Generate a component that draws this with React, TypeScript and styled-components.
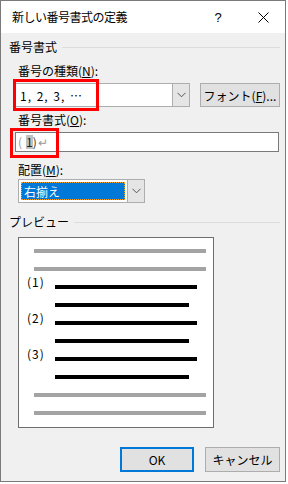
import React from "react";
import styled, { createGlobalStyle } from "styled-components";

const Global = createGlobalStyle`
  html, body { margin: 0; padding: 0; background: #ffffff; }
  body { font-family: "Noto Sans CJK JP", "Noto Sans", sans-serif; font-size: 12px; color: #000; }
  * { box-sizing: border-box; }
`;

const Window = styled.div`
  width: 286px;
  height: 482px;
  border: 1px solid #7a7a7a;
  display: flex;
  flex-direction: column;
  background: #f0f0f0;
`;

const TitleBar = styled.div`
  height: 32px;
  background: #ffffff;
  display: flex;
  align-items: center;
  padding-left: 11px;
  flex-shrink: 0;
`;

const TitleText = styled.div`
  flex: 1;
  font-size: 12px;
  line-height: 14px;
  letter-spacing: -0.5px;
`;

const CaptionButton = styled.div<{ $w: number }>`
  width: ${(p) => p.$w}px;
  height: 32px;
  display: flex;
  align-items: center;
  justify-content: center;
  font-family: "Liberation Sans", sans-serif;
  font-size: 13px;
`;

const Body = styled.div`
  flex: 1;
  display: flex;
  flex-direction: column;
  padding: 0 5px 0 8px;
`;

const GroupHeader = styled.div<{ $mt: number }>`
  margin-top: ${(p) => p.$mt}px;
  height: 14px;
  display: flex;
  align-items: center;
  gap: 5px;
  line-height: 14px;
  &::after {
    content: "";
    flex: 1;
    height: 1px;
    background: #dcdcdc;
  }
`;

const Section = styled.div`
  display: flex;
  flex-direction: column;
  padding-left: 6px;
`;

const FieldLabel = styled.div<{ $mt: number }>`
  margin-top: ${(p) => p.$mt}px;
  margin-left: 3px;
  height: 14px;
  line-height: 14px;
`;

const Row = styled.div<{ $mt: number }>`
  margin-top: ${(p) => p.$mt}px;
  display: flex;
  align-items: center;
`;

const Anchor = styled.div<{ $ml?: number }>`
  position: relative;
  display: flex;
  margin-left: ${(p) => p.$ml ?? 0}px;
`;

const RedMark = styled.div<{ $l: number; $t: number; $w: number; $h: number }>`
  position: absolute;
  left: ${(p) => p.$l}px;
  top: ${(p) => p.$t}px;
  width: ${(p) => p.$w}px;
  height: ${(p) => p.$h}px;
  border: 3px solid #ff0000;
  pointer-events: none;
`;

const Combo = styled.div<{ $w: number; $h: number }>`
  width: ${(p) => p.$w}px;
  height: ${(p) => p.$h}px;
  display: flex;
  border: 1px solid #adadad;
  background: #ffffff;
`;

const ComboField = styled.div`
  flex: 1;
  display: flex;
  align-items: center;
  padding-left: 4px;
  font-size: 12px;
  letter-spacing: 1px;
  word-spacing: 1px;
`;

const DropButton = styled.div`
  width: 17px;
  background: #e5e5e5;
  border-left: 1px solid #adadad;
  display: flex;
  align-items: center;
  justify-content: center;
`;

const PushButton = styled.div<{ $w: number; $default?: boolean }>`
  width: ${(p) => p.$w}px;
  height: 25px;
  background: #e1e1e1;
  border: ${(p) => (p.$default ? "2px solid #0078d7" : "1px solid #adadad")};
  display: flex;
  align-items: center;
  justify-content: center;
  font-size: 12px;
`;

const FontButton = styled(PushButton)`
  margin-left: auto;
  height: 24px;
`;

const TextInput = styled.div`
  width: 264px;
  height: 20px;
  border: 1px solid #7a7a7a;
  background: #ffffff;
  display: flex;
  align-items: center;
  padding-left: 2px;
  font-size: 12px;
  line-height: 14px;
`;

const Glyph = styled.span<{ $c: string; $mr?: number }>`
  color: ${(p) => p.$c};
  margin-right: ${(p) => p.$mr ?? 0}px;
`;

const Hilite = styled.span`
  background: #c0c0c0;
  color: #222;
  line-height: 14px;
`;

const Selection = styled.div`
  flex: 1;
  margin: 2px;
  background: #0078d7;
  border: 1px dotted #f5a623;
  color: #ffffff;
  display: flex;
  align-items: center;
  padding-left: 2px;
`;

const Preview = styled.div`
  margin-top: 8px;
  margin-left: 9px;
  width: 196px;
  height: 191px;
  border: 1px solid #6e6e6e;
  background: #ffffff;
  display: flex;
  flex-direction: column;
  padding-top: 4px;
`;

const PreviewRow = styled.div`
  height: 18px;
  display: flex;
  align-items: center;
`;

const NumberCell = styled.div`
  width: 36px;
  padding-left: 8px;
  font-size: 12px;
  line-height: 14px;
  letter-spacing: 1px;
  transform: translateY(-5px);
`;

const Bar = styled.div<{ $w: number; $ml: number; $c: string }>`
  width: ${(p) => p.$w}px;
  margin-left: ${(p) => p.$ml}px;
  height: 4px;
  background: ${(p) => p.$c};
`;

const ButtonRow = styled.div`
  margin-top: 19px;
  display: flex;
  justify-content: flex-end;
  gap: 11px;
`;

const Chevron = () => (
  <svg width="9" height="6" viewBox="0 0 9 6">
    <polyline points="0.5,0.8 4.5,4.8 8.5,0.8" fill="none" stroke="#555" strokeWidth="1" />
  </svg>
);

const CloseIcon = () => (
  <svg width="11" height="11" viewBox="0 0 11 11">
    <line x1="0.5" y1="0.5" x2="10.5" y2="10.5" stroke="#000" strokeWidth="1" />
    <line x1="10.5" y1="0.5" x2="0.5" y2="10.5" stroke="#000" strokeWidth="1" />
  </svg>
);

const GRAY = "#a3a3a3";
const BLACK = "#000000";

export default function App() {
  const items = ["(1)", "(2)", "(3)"];
  return (
    <>
      <Global />
      <Window>
        <TitleBar>
          <TitleText>新しい番号書式の定義</TitleText>
          <CaptionButton $w={46}>?</CaptionButton>
          <CaptionButton $w={44}>
            <CloseIcon />
          </CaptionButton>
        </TitleBar>
        <Body>
          <GroupHeader $mt={7}>番号書式</GroupHeader>
          <Section>
            <FieldLabel $mt={10}>
              番号の種類(<u>N</u>):
            </FieldLabel>
            <Row $mt={5}>
              <Anchor>
                <Combo $w={175} $h={24}>
                  <ComboField>1, 2, 3, …</ComboField>
                  <DropButton>
                    <Chevron />
                  </DropButton>
                </Combo>
                <RedMark $l={-2} $t={-4} $w={86} $h={32} />
              </Anchor>
              <FontButton $w={80}>
                フォント(<u>F</u>)...
              </FontButton>
            </Row>
            <FieldLabel $mt={6}>
              番号書式(<u>O</u>):
            </FieldLabel>
            <Row $mt={5}>
              <Anchor>
                <TextInput>
                  <Glyph $c="#9a9a9a" $mr={4}>(</Glyph>
                  <Hilite>1</Hilite>
                  <Glyph $c="#333" $mr={1}>)</Glyph>
                  <Glyph $c="#9a9a9a">↵</Glyph>
                </TextInput>
                <RedMark $l={-5} $t={-4} $w={49} $h={30} />
              </Anchor>
            </Row>
            <FieldLabel $mt={11}>
              配置(<u>M</u>):
            </FieldLabel>
            <Row $mt={2}>
              <Anchor $ml={3}>
                <Combo $w={127} $h={24}>
                  <Selection>右揃え</Selection>
                  <DropButton>
                    <Chevron />
                  </DropButton>
                </Combo>
              </Anchor>
            </Row>
          </Section>
          <GroupHeader $mt={12}>プレビュー</GroupHeader>
          <Preview>
            <PreviewRow>
              <Bar $w={172} $ml={15} $c={GRAY} />
            </PreviewRow>
            <PreviewRow>
              <Bar $w={172} $ml={15} $c={GRAY} />
            </PreviewRow>
            {items.map((n) => (
              <React.Fragment key={n}>
                <PreviewRow>
                  <NumberCell>{n}</NumberCell>
                  <Bar $w={142} $ml={0} $c={BLACK} />
                </PreviewRow>
                <PreviewRow>
                  <Bar $w={134} $ml={36} $c={BLACK} />
                </PreviewRow>
              </React.Fragment>
            ))}
            <PreviewRow>
              <Bar $w={172} $ml={15} $c={GRAY} />
            </PreviewRow>
            <PreviewRow>
              <Bar $w={172} $ml={15} $c={GRAY} />
            </PreviewRow>
          </Preview>
          <ButtonRow>
            <PushButton $w={74} $default>
              OK
            </PushButton>
            <PushButton $w={75}>キャンセル</PushButton>
          </ButtonRow>
        </Body>
      </Window>
    </>
  );
}
